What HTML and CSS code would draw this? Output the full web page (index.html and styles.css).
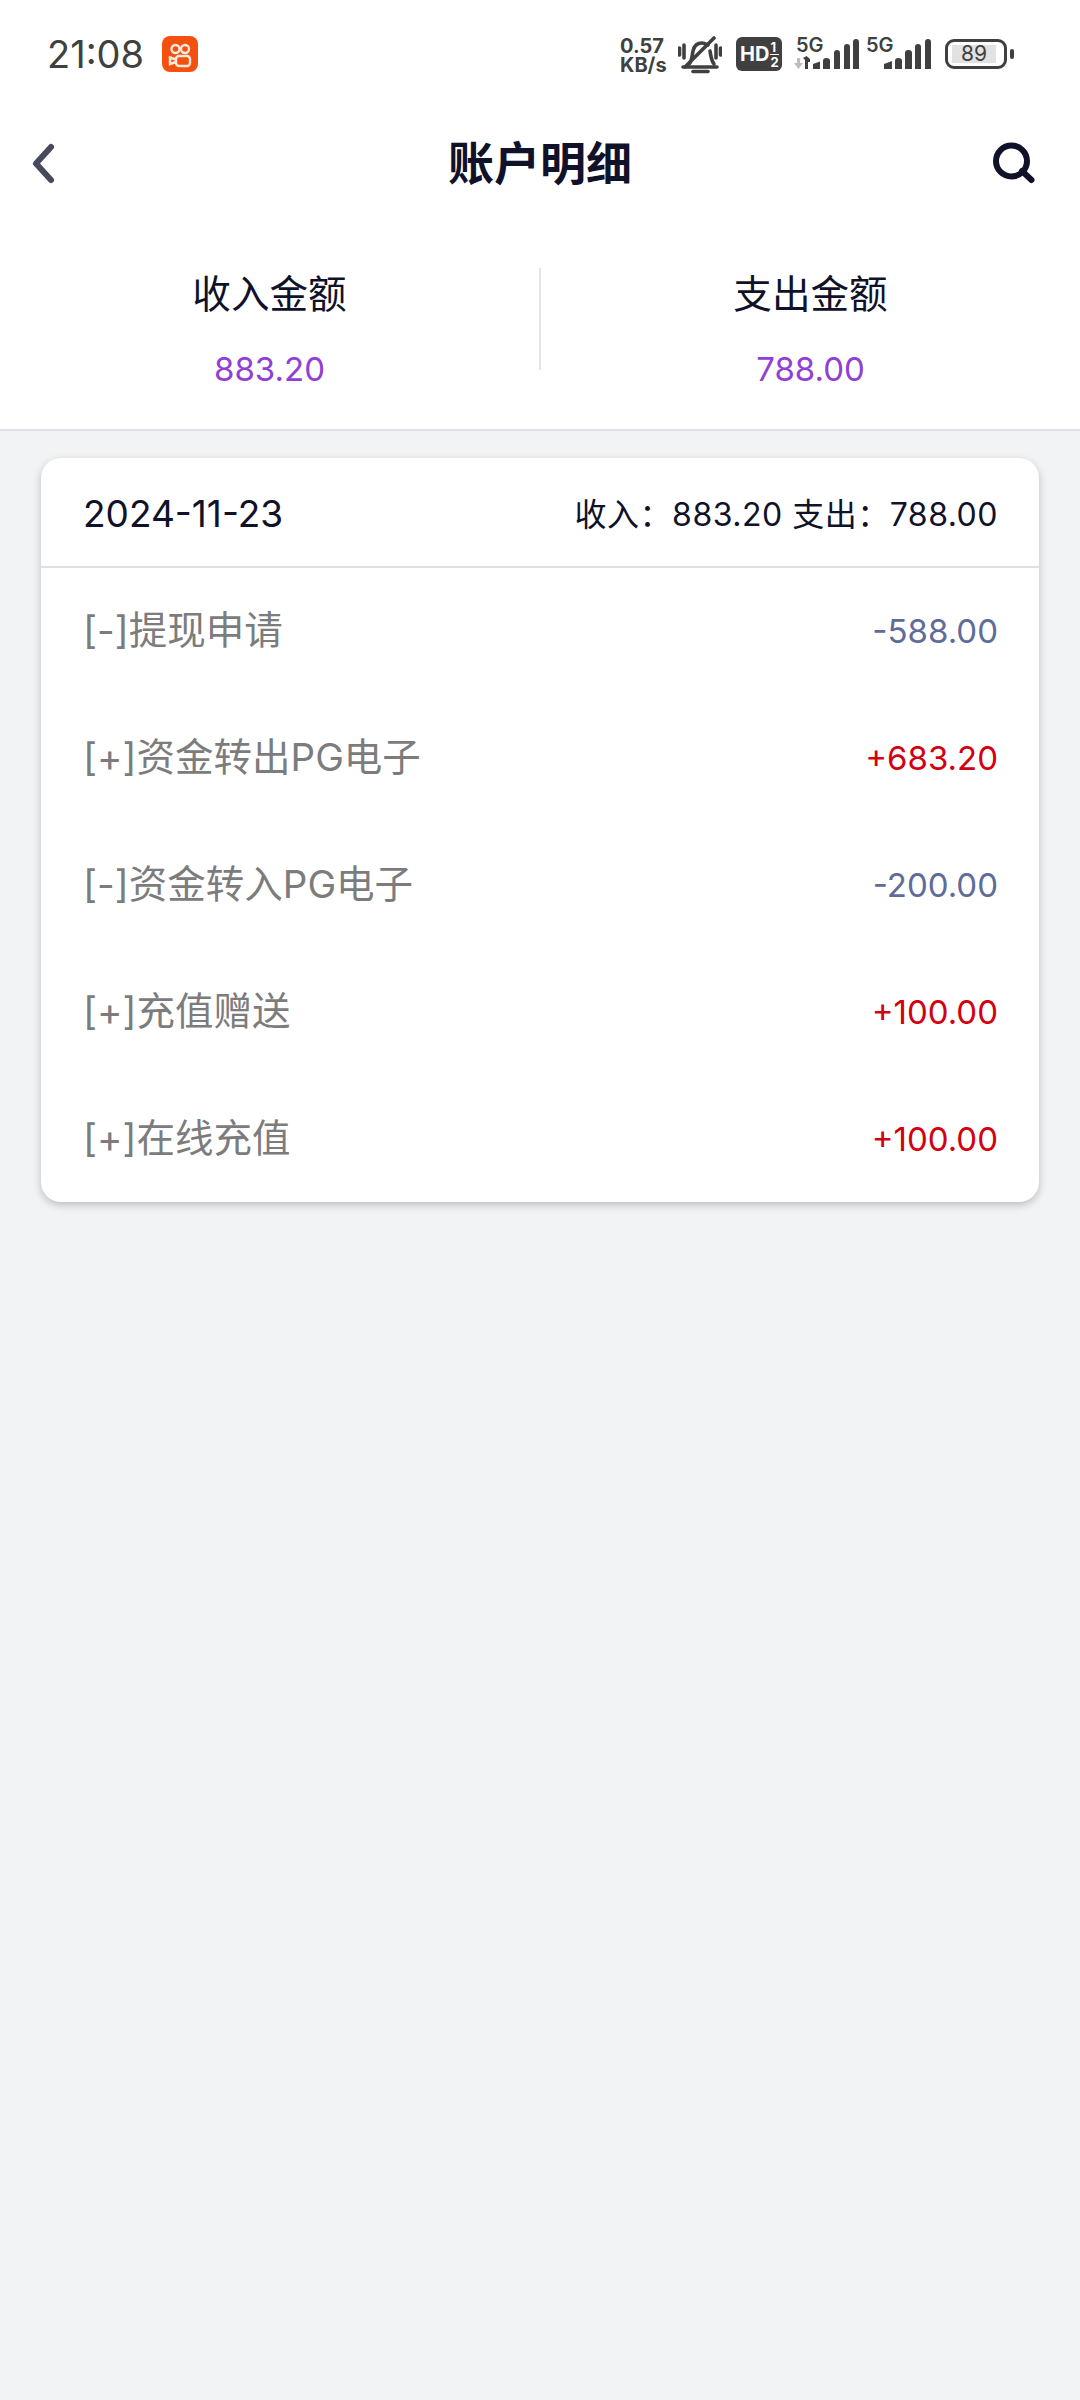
FILE: index.html
```html
<!DOCTYPE html>
<html lang="zh-CN">
<head>
  <meta charset="UTF-8">
  <meta name="viewport" content="width=device-width, initial-scale=1.0">
  <title>账户明细</title>
  <link rel="stylesheet" href="styles.css">
</head>
<body>

  <div class="statusbar">
    <div class="status-left">
      <span class="clock">21:08</span>
      <svg class="app-badge" viewBox="0 0 36 36" width="36" height="36">
        <rect width="36" height="36" rx="8" fill="#f4500f"/>
        <g fill="none" stroke="#ffe9dc" stroke-width="2.4">
          <circle cx="13.500" cy="13" r="4"/>
          <circle cx="23" cy="13" r="4"/>
          <rect x="14" y="20" width="14" height="10" rx="3"/>
          <path d="M14 23.500l-6-2v6.500l6-2"/>
        </g>
      </svg>
    </div>
    <div class="status-right">
      <div class="netspeed"><span>0.57</span><span>KB/s</span></div>
      <svg class="bell" viewBox="0 0 44 38" width="44" height="38">
        <g fill="none" stroke="#404040" stroke-width="3.600" stroke-linecap="round">
          <path d="M11 28c3-3 3-8 4-13 1-5 4-8 9-8 2 0 4 1 6 2"/>
          <path d="M32 15c1 5 1 9 4 13"/>
          <path d="M5 31h34"/>
          <path d="M7 31L36 2"/>
          <path d="M15 35.500h15"/>
          <path d="M6 9v13M1.500 12v7M38 9v13M42.500 12v7"/>
        </g>
      </svg>
      <div class="hd-badge">
        <span class="hd-text">HD</span>
        <span class="hd-sim"><span class="hd-sim-top">1</span><span>2</span></span>
      </div>
      <div class="signal signal-first">
        <span class="net-type">5G</span>
        <svg viewBox="0 0 67 34" width="67" height="34">
          <path d="M1 27h3v-5h3v5h3l-4.500 6z" fill="#bdbdbd"/>
          <path d="M10 22l3.500-2 3.500 3v3h-2v7h-3V24z" fill="#404040"/>
          <path d="M20 28l7-2.500V33h-7zM30 25c0-2 1-3 3.500-3s3.500 1 3.500 3v8h-7zM41 17c0-2 1-3 3-3s3 1 3 3v16h-6zM51 11c0-2 1-3 3-3s3 1 3 3v22h-6zM60 6c0-2 1-3 3-3s3 1 3 3v27h-6z" fill="#404040"/>
        </svg>
      </div>
      <div class="signal signal-second">
        <span class="net-type">5G</span>
        <svg viewBox="0 0 65 34" width="65" height="34">
          <path d="M18 28l8-3v8h-8zM29 25c0-2 1-3 3.500-3s3.500 1 3.500 3v8h-7zM39 17c0-2 1-3 3.500-3s3.500 1 3.500 3v16h-7zM49 11c0-2 1-3 3-3s3 1 3 3v22h-6zM59 6c0-2 1-3 3-3s3 1 3 3v27h-6z" fill="#404040"/>
        </svg>
      </div>
      <div class="battery">
        <div class="battery-body"><span class="battery-level">89</span></div>
        <div class="battery-nub"></div>
      </div>
    </div>
  </div>

  <div class="navbar">
    <svg class="nav-icon nav-back" viewBox="0 0 30 44" width="30" height="44">
      <path d="M22 6L7 22.500 22 39" fill="none" stroke="#474a5c" stroke-width="6" stroke-linecap="round" stroke-linejoin="round"/>
    </svg>
    <h1>账户明细</h1>
    <svg class="nav-icon nav-search" viewBox="0 0 44 44" width="44" height="44">
      <circle cx="20.500" cy="20" r="15.500" fill="none" stroke="#0f1228" stroke-width="6"/>
      <path d="M31 30l9.500 9" stroke="#0f1228" stroke-width="6" stroke-linecap="round"/>
    </svg>
  </div>

  <div class="summary">
    <div class="summary-item">
      <span class="summary-label">收入金额</span>
      <span class="summary-value">883.20</span>
    </div>
    <div class="summary-divider"></div>
    <div class="summary-item">
      <span class="summary-label">支出金额</span>
      <span class="summary-value">788.00</span>
    </div>
  </div>

  <div class="card">
    <div class="card-head">
      <span class="card-date">2024-11-23</span>
      <span class="card-total">收入：883.20 支出：788.00</span>
    </div>
    <div class="card-list">
      <div class="row"><span class="row-name">[-]提现申请</span><span class="row-amount out">-588.00</span></div>
      <div class="row"><span class="row-name">[+]资金转出PG电子</span><span class="row-amount in">+683.20</span></div>
      <div class="row"><span class="row-name">[-]资金转入PG电子</span><span class="row-amount out">-200.00</span></div>
      <div class="row"><span class="row-name">[+]充值赠送</span><span class="row-amount in">+100.00</span></div>
      <div class="row"><span class="row-name">[+]在线充值</span><span class="row-amount in">+100.00</span></div>
    </div>
  </div>

</body>
</html>
```

FILE: styles.css
```css
* {
  box-sizing: border-box;
}

body {
  margin: 0;
  height: 2400px;
  background: #f2f3f5;
  font-family: Inter, "Noto Sans CJK SC", sans-serif;
  color: #0f1228;
}

/* status bar */
.statusbar {
  height: 100px;
  background: #fff;
  padding: 36px 66px 0 47px;
  display: flex;
  justify-content: space-between;
  align-items: flex-start;
  color: #404040;
}

.status-left {
  display: flex;
  align-items: center;
  gap: 18px;
}

.clock {
  font-size: 38px;
  line-height: 36px;
}

.status-right {
  display: flex;
  align-items: flex-start;
}

.netspeed {
  width: 48px;
  display: flex;
  flex-direction: column;
  font-size: 20px;
  font-weight: 700;
  line-height: 19px;
  padding-top: 1px;
  white-space: nowrap;
}

.bell {
  margin-left: 10px;
}

.hd-badge {
  width: 46px;
  height: 34px;
  margin: 1px 0 0 14px;
  border-radius: 6px;
  background: #404040;
  color: #fff;
  font-weight: 700;
  display: flex;
  align-items: center;
  padding-left: 4px;
}

.hd-text {
  font-size: 20px;
}

.hd-sim {
  display: flex;
  flex-direction: column;
  font-size: 13px;
  line-height: 14px;
  margin-left: 1px;
}

.hd-sim-top {
  border-bottom: 1px solid #fff;
}

.signal {
  height: 34px;
  position: relative;
}

.signal svg {
  display: block;
}

.signal-first {
  width: 67px;
  margin-left: 11px;
}

.signal-second {
  width: 65px;
  margin-left: 6px;
}

/* network label sits above the low bars */
.net-type {
  position: absolute;
  top: -1px;
  left: 3px;
  font-size: 20px;
  font-weight: 600;
  line-height: 20px;
}

.signal-second .net-type {
  left: 0;
}

.battery {
  display: flex;
  align-items: center;
  gap: 3px;
  margin: 3px 0 0 14px;
}

.battery-body {
  width: 62px;
  height: 30px;
  border: 3px solid #404040;
  border-radius: 9px;
  padding: 3px 4px;
}

.battery-level {
  display: block;
  width: 44px;
  height: 18px;
  background: #e2e2e2;
  font-size: 21px;
  line-height: 18px;
  text-align: center;
}

.battery-nub {
  width: 4px;
  height: 10px;
  border-radius: 2px;
  background: #404040;
}

/* title bar */
.navbar {
  height: 126px;
  background: #fff;
  padding: 0 29px;
  display: grid;
  grid-template-columns: 1fr auto 1fr;
  align-items: center;
}

.navbar h1 {
  margin: 0;
  font-size: 46px;
  font-weight: 700;
  line-height: 60px;
}

.nav-icon {
  display: block;
}

.nav-search {
  justify-self: end;
  margin-right: 16px;
}

/* income / expense totals */
.summary {
  height: 205px;
  background: #fff;
  border-bottom: 2px solid #dfe0e4;
  display: flex;
  padding-top: 42px;
}

.summary-item {
  flex: 1;
  display: flex;
  flex-direction: column;
  align-items: center;
}

.summary-label {
  font-size: 38.600px;
  line-height: 52px;
}

.summary-value {
  margin-top: 24px;
  font-size: 33px;
  line-height: 50px;
  color: #9040d6;
}

.summary-divider {
  width: 2px;
  height: 102px;
  background: #e4e5e8;
}

/* day card */
.card {
  margin: 27px 41px 0;
  height: 744px;
  background: #fff;
  border-radius: 20px;
  box-shadow: 0 3px 8px rgba(0, 0, 0, 0.22);
}

.card-head {
  height: 110px;
  padding: 0 41px 0 42px;
  border-bottom: 2px solid #dfe0e4;
  display: flex;
  align-items: center;
  justify-content: space-between;
}

.card-date {
  font-size: 37px;
  padding-top: 2px;
}

.card-total {
  font-size: 32px;
  letter-spacing: 0.5px;
}

.row {
  height: 127px;
  padding: 0 41px 3px 42px;
  display: flex;
  align-items: center;
  justify-content: space-between;
}

.row-name {
  font-size: 38.500px;
  color: #7c7c7c;
  padding-bottom: 6px;
}

.row-amount {
  font-size: 33px;
  padding-top: 2px;
}

.row-amount.out {
  color: #5e6c99;
}

.row-amount.in {
  color: #d40010;
}
```
